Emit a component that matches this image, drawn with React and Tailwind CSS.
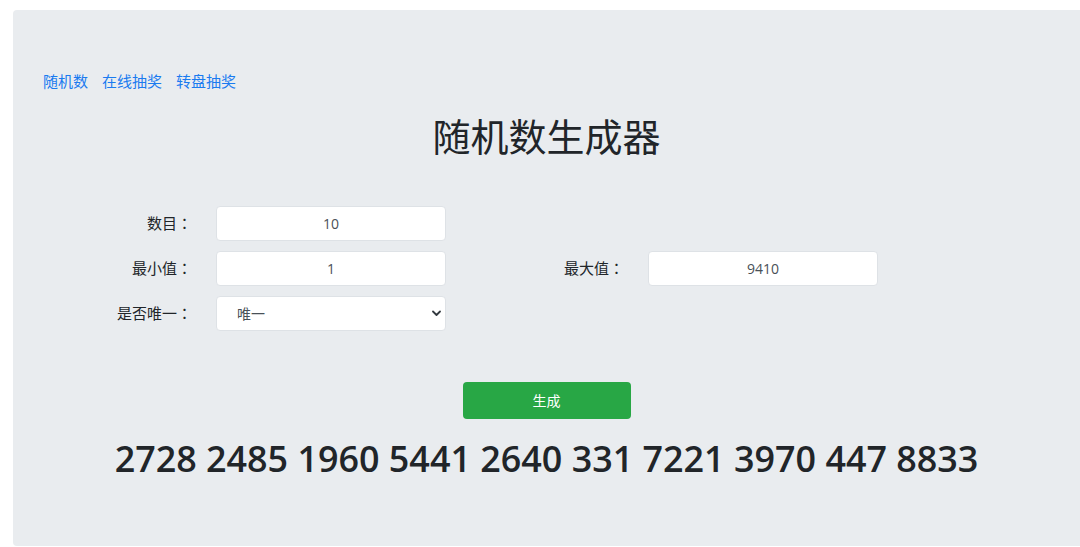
import React, { useState } from 'react'

const font = { fontFamily: '"Open Sans", "Noto Sans CJK SC", sans-serif' }

// full-width colon centred in its box, as in the reference
const Colon = () => <span style={{ fontFamily: '"Noto Sans CJK TC", sans-serif' }}>：</span>

function Field({ label, labelWidth, value }) {
  return (
    <div className="flex items-center gap-[24px]">
      <label className={`${labelWidth} text-right text-[15px] text-[#212529]`}>{label}<Colon /></label>
      <input
        defaultValue={value}
        className="w-[230px] h-[35px] rounded bg-white border border-[#dee2e6] text-center text-[14px] text-[#495057] outline-none"
      />
    </div>
  )
}

export default function App() {
  const [nums] = useState([2728, 2485, 1960, 5441, 2640, 331, 7221, 3970, 447, 8833])

  return (
    <div className="w-[1080px] h-[547px] bg-white pt-[10px] pl-[13px] overflow-hidden" style={font}>
      <div className="h-[536px] bg-[#e9ecef] rounded-l px-[30px] pt-[61px]">
        <div className="flex gap-[14px] text-[15px] leading-[20px] text-[#1a7bf0]">
          <a href="#">随机数</a>
          <a href="#">在线抽奖</a>
          <a href="#">转盘抽奖</a>
        </div>

        <h1 className="mt-[22px] text-center text-[38px] leading-[46px] text-[#212529]">随机数生成器</h1>

        <div className="mt-[47px] flex flex-col gap-[10px]">
          <Field label="数目" labelWidth="w-[149px]" value="10" />
          <div className="flex items-center">
            <Field label="最小值" labelWidth="w-[149px]" value="1" />
            <Field label="最大值" labelWidth="w-[178px]" value="9410" />
          </div>
          <div className="flex items-center gap-[24px]">
            <label className="w-[149px] text-right text-[15px] text-[#212529]">是否唯一<Colon /></label>
            <div className="relative w-[230px] h-[35px]">
              <select className="appearance-none w-full h-full rounded bg-white border border-[#dee2e6] pl-[20px] text-[14px] text-[#495057] outline-none">
                <option>唯一</option>
                <option>不唯一</option>
              </select>
              <svg className="absolute right-[5px] top-[14px] pointer-events-none" width="9" height="7" viewBox="0 0 9 7">
                <path d="M1 1.5l3.5 3.5 3.5-3.5" fill="none" stroke="#343a40" strokeWidth="1.8" strokeLinecap="round" strokeLinejoin="round" />
              </svg>
            </div>
          </div>
        </div>

        <div className="mt-[51px] flex justify-center">
          <button className="w-[168px] h-[37px] rounded bg-[#28a745] text-white text-[14px]">生成</button>
        </div>

        <div className="mt-[18px] text-center text-[35.9px] leading-[43px] font-semibold text-[#212529]">
          {nums.join(' ')}
        </div>
      </div>
    </div>
  )
}
